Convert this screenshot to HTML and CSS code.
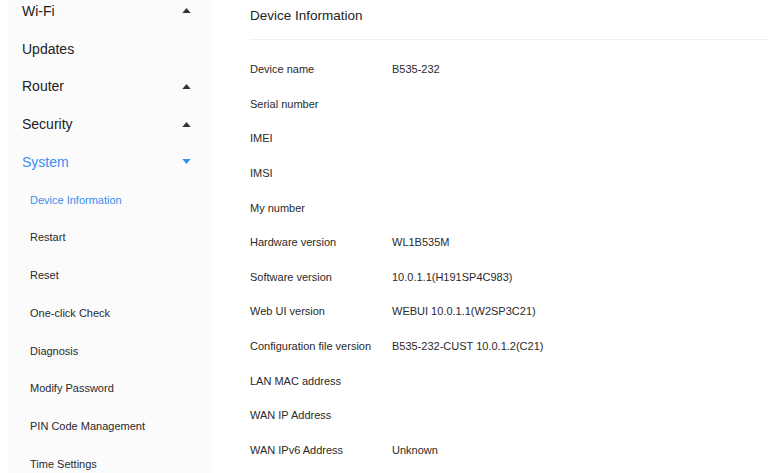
FILE: index.html
```html
<!DOCTYPE html>
<html>
<head>
<meta charset="utf-8">
<link rel="stylesheet" href="styles.css">
</head>
<body>
<div class="page">
  <nav class="sidebar">
    <ul class="menu">
      <li class="item"><span>Wi-Fi</span><svg class="caret" viewBox="0 0 10 6"><path d="M0 6 L5 0 L10 6 Z"/></svg></li>
      <li class="item"><span>Updates</span></li>
      <li class="item"><span>Router</span><svg class="caret" viewBox="0 0 10 6"><path d="M0 6 L5 0 L10 6 Z"/></svg></li>
      <li class="item"><span>Security</span><svg class="caret" viewBox="0 0 10 6"><path d="M0 6 L5 0 L10 6 Z"/></svg></li>
      <li class="item active"><span>System</span><svg class="caret" viewBox="0 0 10 6"><path d="M0 0 L10 0 L5 6 Z"/></svg></li>
      <li class="sub active">Device Information</li>
      <li class="sub">Restart</li>
      <li class="sub">Reset</li>
      <li class="sub">One-click Check</li>
      <li class="sub">Diagnosis</li>
      <li class="sub">Modify Password</li>
      <li class="sub">PIN Code Management</li>
      <li class="sub">Time Settings</li>
    </ul>
  </nav>
  <main class="content">
    <h1 class="title">Device Information</h1>
    <div class="rows">
      <div class="row"><span class="label">Device name</span><span class="value">B535-232</span></div>
      <div class="row"><span class="label">Serial number</span><span class="value"></span></div>
      <div class="row"><span class="label">IMEI</span><span class="value"></span></div>
      <div class="row"><span class="label">IMSI</span><span class="value"></span></div>
      <div class="row"><span class="label">My number</span><span class="value"></span></div>
      <div class="row"><span class="label">Hardware version</span><span class="value">WL1B535M</span></div>
      <div class="row"><span class="label">Software version</span><span class="value">10.0.1.1(H191SP4C983)</span></div>
      <div class="row"><span class="label">Web UI version</span><span class="value">WEBUI 10.0.1.1(W2SP3C21)</span></div>
      <div class="row"><span class="label">Configuration file version</span><span class="value">B535-232-CUST 10.0.1.2(C21)</span></div>
      <div class="row"><span class="label">LAN MAC address</span><span class="value"></span></div>
      <div class="row"><span class="label">WAN IP Address</span><span class="value"></span></div>
      <div class="row"><span class="label">WAN IPv6 Address</span><span class="value">Unknown</span></div>
    </div>
  </main>
</div>
</body>
</html>
```

FILE: styles.css
```css
html, body {
  margin: 0;
  padding: 0;
  background: #ffffff;
  font-family: "Liberation Sans", Arial, sans-serif;
  color: #333333;
  overflow: hidden;
}

.page {
  display: flex;
  height: 473px;
  padding-left: 8px;
}

.sidebar {
  width: 204px;
  flex: none;
  background: #fbfbfc;
}

.menu {
  list-style: none;
  margin: -8px 0 0 0;
  padding: 0;
}

.item {
  height: 37.75px;
  display: flex;
  align-items: center;
  justify-content: space-between;
  padding: 0 21px 0 14px;
  font-size: 14px;
  color: #222222;
}

.item.active {
  color: #3a8ef0;
}

.caret {
  width: 9px;
  height: 5px;
  fill: #333333;
}

.item.active .caret {
  fill: #3a8ef0;
}

.sub {
  height: 37.75px;
  display: flex;
  align-items: center;
  padding-left: 22px;
  font-size: 11px;
  color: #2a2a2a;
}

.sub.active {
  color: #3a8ef0;
}

.content {
  flex: 1;
  padding-left: 38px;
}

.title {
  margin: 0;
  height: 40px;
  box-sizing: border-box;
  padding-top: 8px;
  font-size: 13.5px;
  font-weight: normal;
  color: #222222;
  border-bottom: 1px solid #efefef;
  line-height: 16px;
}

.rows {
  padding-top: 12px;
}

.row {
  height: 34.6px;
  display: flex;
  align-items: center;
  font-size: 11px;
  color: #2a2a2a;
}

.label {
  width: 142px;
  flex: none;
}
```
